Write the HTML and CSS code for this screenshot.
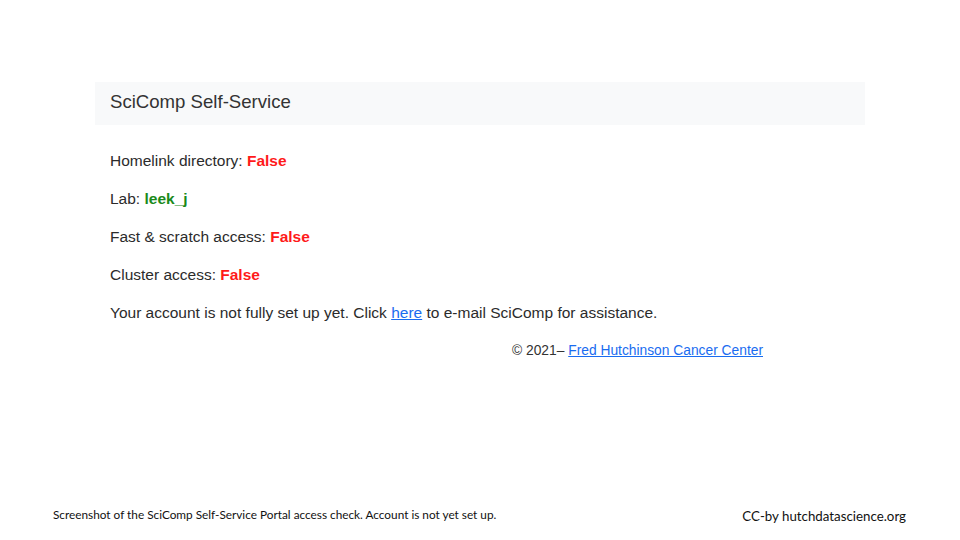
FILE: index.html
```html
<!DOCTYPE html>
<html>
<head>
<meta charset="utf-8">
<link rel="stylesheet" href="styles.css">
</head>
<body>
<div class="slide">
  <div class="portal">
    <div class="header">SciComp Self-Service</div>
    <div class="content">
      <p>Homelink directory: <b class="bad">False</b></p>
      <p>Lab: <b class="good">leek_j</b></p>
      <p>Fast &amp; scratch access: <b class="bad">False</b></p>
      <p>Cluster access: <b class="bad">False</b></p>
      <p>Your account is not fully set up yet. Click <a href="#">here</a> to e-mail SciComp for assistance.</p>
      <div class="footer">© 2021– <a href="#">Fred Hutchinson Cancer Center</a></div>
    </div>
  </div>
  <div class="caption">
    <span class="desc">Screenshot of the SciComp Self-Service Portal access check. Account is not yet set up.</span>
    <span class="credit">CC-by hutchdatascience.org</span>
  </div>
</div>
</body>
</html>
```
FILE: styles.css
```css
html, body { margin: 0; padding: 0; background: #fff; }
.slide {
  width: 960px; height: 540px;
  display: flex; flex-direction: column;
  box-sizing: border-box;
}
.portal {
  margin: 82px 95px 0 95px;
  font-family: "Liberation Sans", Arial, sans-serif;
  color: #2b2b2b;
}
.header {
  background: #f8f9fa;
  height: 43px;
  box-sizing: border-box;
  padding: 0 15px 3px 15px;
  display: flex; align-items: center;
  font-size: 18.6px;
  color: #333;
}
.content { padding: 0 15px; }
.content p {
  margin: 0;
  height: 38px;
  line-height: 38px;
  font-size: 15.5px;
}
.content p:first-child { margin-top: 17px; }
.bad { color: #ff1a1a; }
.good { color: #1a8a1a; }
a { color: #1a6cf0; }
.footer {
  text-align: right;
  padding-right: 87px;
  font-size: 13.8px;
  line-height: 38px;
  color: #333;
}
.caption {
  margin-top: auto;
  height: 34px;
  display: flex; justify-content: space-between; align-items: flex-start;
  padding: 0 54px 0 53px;
  font-family: Lato, sans-serif;
  color: #111;
}
.desc { font-size: 11.8px; line-height: 18px; margin-top: 0px; }
.credit { font-size: 13.3px; line-height: 18px; margin-top: 1px; }
```
